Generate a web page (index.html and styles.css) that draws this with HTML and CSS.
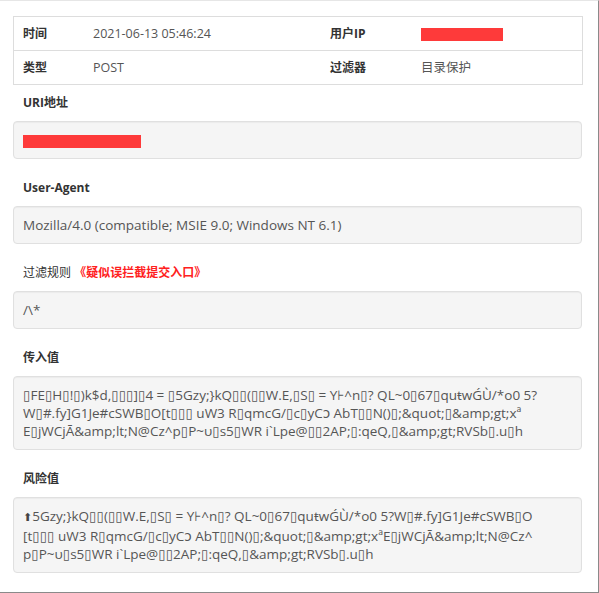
FILE: index.html
```html
<!DOCTYPE html>
<html lang="zh-CN">
<head>
    <meta charset="UTF-8">
    <title>日志详情</title>
    <link rel="stylesheet" href="styles.css">
</head>
<body>

<div class="detail-box">
    <table class="info-table">
        <tr>
            <th class="c1">时间</th>
            <td class="c2">2021-06-13 05:46:24</td>
            <th class="c3">用户IP</th>
            <td><span class="mask mask-ip"></span></td>
        </tr>
        <tr>
            <th>类型</th>
            <td>POST</td>
            <th>过滤器</th>
            <td>目录保护</td>
        </tr>
    </table>

    <div class="section">
        <div class="label">URI地址</div>
        <div class="well"><span class="mask mask-uri"></span></div>
    </div>

    <div class="section">
        <div class="label">User-Agent</div>
        <div class="well">Mozilla/4.0 (compatible; MSIE 9.0; Windows NT 6.1)</div>
    </div>

    <div class="section">
        <div class="label label-light">过滤规则 <span class="rule-name">《疑似误拦截提交入口》</span></div>
        <div class="well">/\*</div>
    </div>

    <div class="section">
        <div class="label">传入值</div>
        <div class="well">▯FE▯H▯!▯)k$d,▯▯▯]▯4 = ▯5Gzy;}kQ▯▯(▯▯W.E,▯S▯ = Y⊦^n▯? QL~0▯67▯quŧwǴÙ/*o0 5?<br>W▯#.fy]G1Je#cSWB▯O[t▯▯▯ uW3 R▯qmcG/▯c▯yCↄ AbT▯▯N()▯;&amp;quot;▯&amp;amp;gt;xª<br>E▯jWCjĀ&amp;amp;lt;N@Cz^p▯P~υ▯s5▯WR i`Lpe@▯▯2AP;▯:qeQ,▯&amp;amp;gt;RVSb▯.u▯h</div>
    </div>

    <div class="section">
        <div class="label">风险值</div>
        <div class="well"><span class="arrow">⬆</span>5Gzy;}kQ▯▯(▯▯W.E,▯S▯ = Y⊦^n▯? QL~0▯67▯quŧwǴÙ/*o0 5?W▯#.fy]G1Je#cSWB▯O<br>[t▯▯▯ uW3 R▯qmcG/▯c▯yCↄ AbT▯▯N()▯;&amp;quot;▯&amp;amp;gt;xªE▯jWCjĀ&amp;amp;lt;N@Cz^<br>p▯P~υ▯s5▯WR i`Lpe@▯▯2AP;▯:qeQ,▯&amp;amp;gt;RVSb▯.u▯h</div>
    </div>
</div>

</body>
</html>
```

FILE: styles.css
```css
body {
    margin: 0;
    padding: 0;
    font-family: "Open Sans", "Noto Sans CJK SC", "DejaVu Sans", sans-serif;
    font-size: 13px;
    color: #555;
    background: #fff;
}

.detail-box {
    box-sizing: border-box;
    width: 599px;
    height: 593px;
    border-top: 1px solid #e6e6e6;
    border-right: 1px solid #8a8a8a;
    border-bottom: 1px solid #8a8a8a;
    padding: 15px 16px 0 13px;
    overflow: hidden;
}

/* верхняя таблица */
.info-table {
    width: 570px;
    border-collapse: collapse;
    border: 1px solid #ddd;
    margin-bottom: 8px;
    font-size: 12.5px;
}

.info-table th,
.info-table td {
    text-align: left;
    height: 33px;
    padding: 0 0 0 9px;
    line-height: 17px;
    border-top: 1px solid #ddd;
    white-space: nowrap;
}

.info-table th {
    font-weight: bold;
    font-size: 12px;
    color: #333;
}

.info-table .c1 { width: 61px; }
.info-table .c2 { width: 228px; }
.info-table .c3 { width: 82px; }

.mask {
    display: inline-block;
    background: #fe3a3a;
    vertical-align: middle;
}

.mask-ip {
    width: 82px;
    height: 13px;
}

.mask-uri {
    width: 118px;
    height: 13px;
}

.section {
    margin-bottom: 19px;
}

.label {
    font-size: 12px;
    font-weight: bold;
    color: #333;
    line-height: 20px;
    padding-left: 10px;
    margin-bottom: 8px;
}

.label-light {
    font-weight: normal;
}

.rule-name {
    color: #ff2020;
    font-weight: bold;
}

.well {
    background-color: #f5f5f5;
    border: 1px solid #e0e0e0;
    border-radius: 4px;
    padding: 9px 9px;
    font-size: 13.5px;
    line-height: 18px;
    min-height: 18px;
    box-shadow: inset 0 1px 1px rgba(0, 0, 0, 0.04);
    white-space: nowrap;
    overflow: hidden;
}

.arrow {
    font-family: "DejaVu Sans", sans-serif;
    font-size: 11px;
    color: #444;
}
```
